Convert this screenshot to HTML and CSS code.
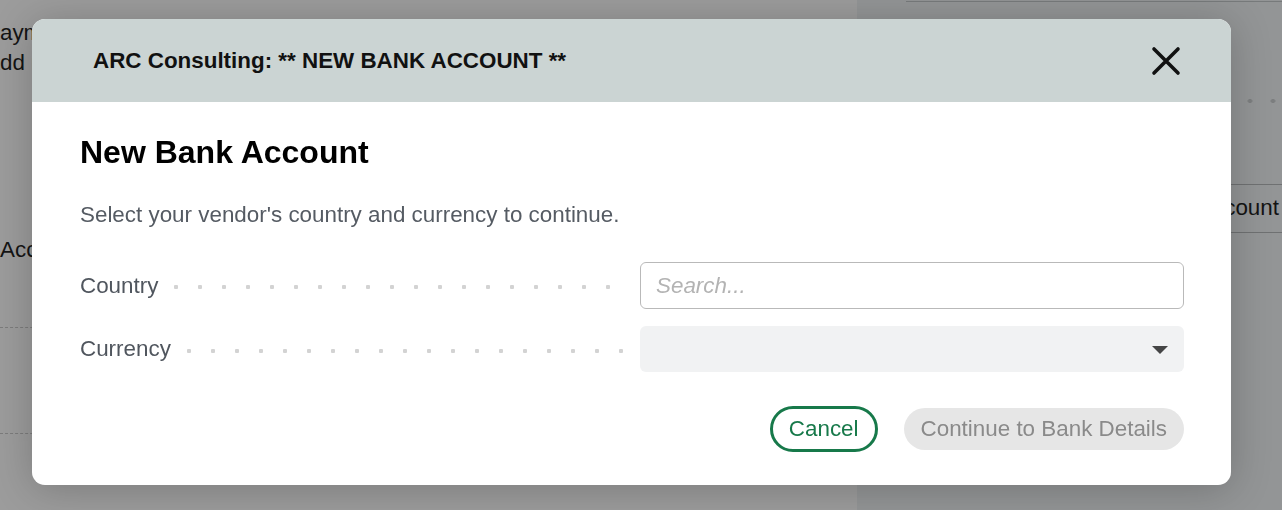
FILE: index.html
```html
<!DOCTYPE html>
<html lang="en">
<head>
<meta charset="utf-8">
<title>New Bank Account</title>
<link rel="stylesheet" href="styles.css">
</head>
<body>
<div class="page">
  <div class="main">
    <p class="bg-line first">Payments</p>
    <p class="bg-line">Add remittance</p>
    <p class="bg-line acc">Account</p>
    <div class="dash one"></div>
    <div class="dash two"></div>
  </div>
  <div class="side">
    <div class="side-inner">
      <div class="side-dots"></div>
      <div class="side-btn">New Bank Account</div>
    </div>
  </div>
</div>

<div class="overlay">
  <div class="modal" role="dialog" aria-label="New Bank Account">
    <div class="modal-header">
      <h2 class="modal-heading">ARC Consulting: ** NEW BANK ACCOUNT **</h2>
      <button class="close-btn" aria-label="Close">
        <svg width="30" height="30" viewBox="0 0 30 30" aria-hidden="true">
          <path d="M3 3 L27 27 M27 3 L3 27" stroke="#111" stroke-width="3.6" stroke-linecap="round" fill="none"/>
        </svg>
      </button>
    </div>
    <div class="modal-body">
      <h1 class="title">New Bank Account</h1>
      <p class="subtitle">Select your vendor's country and currency to continue.</p>
      <div class="form">
        <div class="label-cell"><span class="label">Country</span><span class="leader"></span></div>
        <div class="input"><span class="placeholder">Search...</span></div>
        <div class="label-cell"><span class="label">Currency</span><span class="leader"></span></div>
        <div class="select"><span class="caret"></span></div>
      </div>
      <div class="actions">
        <button class="btn-cancel">Cancel</button>
        <button class="btn-continue">Continue to Bank Details</button>
      </div>
    </div>
  </div>
</div>
</body>
</html>
```

FILE: styles.css
```css
* { box-sizing: border-box; }

html, body {
  margin: 0;
  padding: 0;
  width: 1282px;
  height: 510px;
  overflow: hidden;
  font-family: "Liberation Sans", Arial, Helvetica, sans-serif;
}

.page {
  display: flex;
  width: 1282px;
  height: 510px;
  background: #9c9c9c;
}

.main {
  width: 857px;
  padding-top: 18px;
  overflow: hidden;
}

.bg-line {
  margin: 0 0 0 -15px;
  font-size: 22.4px;
  line-height: 30px;
  color: #141414;
  white-space: nowrap;
}

.bg-line.acc {
  margin-top: 157px;
  margin-left: 0;
}

.dash {
  border-top: 1px dashed #7c7c7c;
  width: 400px;
}

.dash.one { margin-top: 62px; }
.dash.two { margin-top: 105px; }

.side {
  flex: 1;
  background: #939596;
  overflow: hidden;
}

.side-inner {
  margin-left: 49px;
  margin-top: 1px;
  border-top: 1px solid #777a7b;
  width: 420px;
}

.side-dots {
  margin-top: 96px;
  height: 6px;
  background-image: radial-gradient(circle, #7c7e7f 2px, transparent 2.5px);
  background-size: 23px 6px;
  background-repeat: repeat-x;
  background-position: 10.5px center;
}

.side-btn {
  margin-top: 80px;
  width: 376px;
  height: 49px;
  border-top: 1px solid #6f7172;
  border-bottom: 1px solid #6f7172;
  text-align: right;
  padding-right: 3px;
  font-size: 22.4px;
  line-height: 46px;
  color: #141414;
  white-space: nowrap;
}

/* Overlay & modal */
.overlay {
  position: fixed;
  inset: 0;
  padding: 19px 0 0 32px;
}

.modal {
  width: 1199px;
  height: 466px;
  background: #ffffff;
  border-radius: 13px;
  overflow: hidden;
  box-shadow: 0 4px 40px rgba(0, 0, 0, 0.22);
}

.modal-header {
  height: 83px;
  background: #cbd4d3;
  display: flex;
  align-items: center;
  justify-content: space-between;
  padding: 0 50px 0 61px;
}

.modal-heading {
  margin: 0;
  font-size: 22.4px;
  font-weight: 700;
  color: #111;
}

.close-btn {
  border: 0;
  padding: 0;
  background: transparent;
  width: 30px;
  height: 30px;
  display: flex;
  cursor: pointer;
}

.modal-body {
  padding: 31px 47px 0 48px;
}

.title {
  margin: 0;
  font-size: 32px;
  line-height: 38px;
  font-weight: 700;
  color: #000;
}

.subtitle {
  margin: 31px 0 0;
  font-size: 22.4px;
  line-height: 26px;
  color: #555b63;
}

.form {
  margin-top: 34px;
  display: grid;
  grid-template-columns: 1fr 544px;
  column-gap: 12px;
  row-gap: 17px;
}

.label-cell {
  display: flex;
  align-items: center;
}

.label {
  font-size: 22.4px;
  color: #50565e;
  white-space: nowrap;
}

.leader {
  flex: 1;
  margin-left: 6px;
  height: 6px;
  margin-top: 3px;
  background-image: radial-gradient(circle, #d3d3d3 2px, transparent 2.5px);
  background-size: 24px 6px;
  background-repeat: repeat-x;
  background-position: left center;
}

.input {
  height: 47px;
  border: 1px solid #b9b9b9;
  border-radius: 6px;
  display: flex;
  align-items: center;
  padding-left: 15px;
}

.placeholder {
  font-size: 22.4px;
  font-style: italic;
  color: #b3b3b3;
}

.select {
  height: 46px;
  border-radius: 6px;
  background: #f1f2f3;
  display: flex;
  align-items: center;
  justify-content: flex-end;
  padding-right: 16px;
}

.caret {
  width: 0;
  height: 0;
  border-left: 8px solid transparent;
  border-right: 8px solid transparent;
  border-top: 8px solid #454545;
  margin-top: 1px;
}

.actions {
  margin-top: 34px;
  display: flex;
  justify-content: flex-end;
  align-items: center;
  gap: 26px;
}

.btn-cancel {
  height: 46px;
  padding: 0 16px;
  border: 3px solid #17794a;
  border-radius: 24px;
  background: #fff;
  color: #17794a;
  font-family: inherit;
  font-size: 22.4px;
  cursor: pointer;
}

.btn-continue {
  height: 42px;
  padding: 0 17px;
  border: 0;
  border-radius: 21px;
  background: #e6e6e6;
  color: #8a8a8a;
  font-family: inherit;
  font-size: 22.4px;
}
```
